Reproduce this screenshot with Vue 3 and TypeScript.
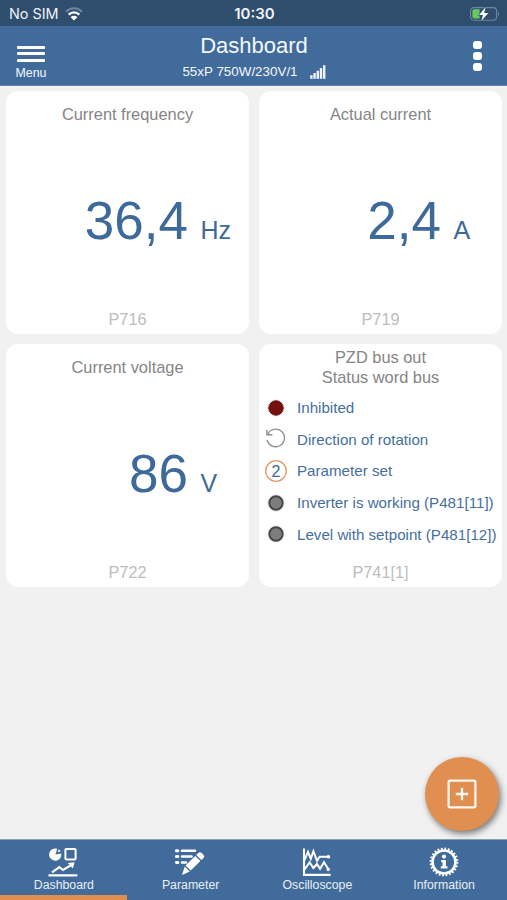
<script setup lang="ts">
interface Metric {
  title: string
  value: string
  unit: string
  code: string
}

type Marker = 'red' | 'rotate' | 'set' | 'grey'

interface StatusRow {
  marker: Marker
  label: string
}

type TabIcon = 'dashboard' | 'parameter' | 'scope' | 'info'

interface Tab {
  icon: TabIcon
  label: string
}

const metrics: Metric[] = [
  { title: 'Current frequency', value: '36,4', unit: 'Hz', code: 'P716' },
  { title: 'Actual current', value: '2,4', unit: 'A', code: 'P719' },
  { title: 'Current voltage', value: '86', unit: 'V', code: 'P722' },
]

const statusRows: StatusRow[] = [
  { marker: 'red', label: 'Inhibited' },
  { marker: 'rotate', label: 'Direction of rotation' },
  { marker: 'set', label: 'Parameter set' },
  { marker: 'grey', label: 'Inverter is working (P481[11])' },
  { marker: 'grey', label: 'Level with setpoint (P481[12])' },
]

const tabs: Tab[] = [
  { icon: 'dashboard', label: 'Dashboard' },
  { icon: 'parameter', label: 'Parameter' },
  { icon: 'scope', label: 'Oscilloscope' },
  { icon: 'info', label: 'Information' },
]
const activeTab = 0
</script>

<template>
  <div class="screen">
    <div class="status-bar">
      <div class="carrier">
        <span>No SIM</span>
        <svg class="wifi" width="18" height="14" viewBox="0 0 18 14" fill="none">
          <path d="M1.1 4.7A11 11 0 0 1 16.9 4.7" stroke="#6d859e" stroke-width="2" />
          <path d="M3.7 7.6A7.4 7.4 0 0 1 14.3 7.6" stroke="#fff" stroke-width="2.3" />
          <path d="M9 13.6L5.6 10.2A4.8 4.8 0 0 1 12.4 10.2Z" fill="#fff" />
        </svg>
      </div>
      <div class="clock">10:30</div>
      <div class="battery">
        <svg width="30" height="16" viewBox="0 0 30 16">
          <rect x="0.6" y="1.6" width="26" height="12.6" rx="3.4" fill="none" stroke="#7288a0" stroke-width="1.1" />
          <path d="M28 5.5q2.1 2.4 0 4.8z" fill="#7288a0" />
          <path d="M4.2 3.2H9.6V12.6H4.2Q2.4 12.6 2.4 10.8V5Q2.4 3.2 4.2 3.2Z" fill="#62cb62" />
          <path d="M15.7 1L9 8.9H13L11.2 15L18.4 6.9H14.2Z" fill="#fff" stroke="#2f4d6d" stroke-width="1.2" paint-order="stroke" />
        </svg>
      </div>
    </div>

    <header class="app-bar">
      <button class="menu">
        <span class="burger"><i></i><i></i><i></i></span>
        <span class="menu-label">Menu</span>
      </button>
      <div class="heading">
        <h1>Dashboard</h1>
        <div class="device">
          <span>55xP 750W/230V/1</span>
          <svg width="16" height="14" viewBox="0 0 16 14" fill="#eef3f8">
            <rect x="0.2" y="10.2" width="2.4" height="3.6" />
            <rect x="3.4" y="8" width="2.4" height="5.8" />
            <rect x="6.6" y="5.8" width="2.4" height="8" />
            <rect x="9.8" y="3" width="2.4" height="10.8" />
            <rect x="13" y="0.2" width="2.4" height="13.6" />
          </svg>
        </div>
      </div>
      <button class="more"><i></i><i></i><i></i></button>
    </header>

    <main class="board">
      <section v-for="m in metrics" :key="m.code" class="card">
        <h2>{{ m.title }}</h2>
        <div class="reading">
          <span class="value">{{ m.value }}</span>
          <span class="unit">{{ m.unit }}</span>
        </div>
        <footer>{{ m.code }}</footer>
      </section>

      <section class="card">
        <h2>PZD bus out<br />Status word bus</h2>
        <ul class="states">
          <li v-for="row in statusRows" :key="row.label">
            <svg class="marker" width="24" height="24" viewBox="0 0 24 24" fill="none">
              <template v-if="row.marker === 'red'">
                <circle cx="12" cy="12" r="9" fill="#f1efef" />
                <circle cx="12" cy="12" r="7.2" fill="#740f0b" stroke="#5b1512" stroke-width="1" />
              </template>
              <template v-else-if="row.marker === 'rotate'">
                <path d="M3.6 7.4A8.8 8.8 0 1 1 3.1 13" stroke="#8f8f8f" stroke-width="1.4" />
                <path d="M2.9 2.9V7.8H8.4" stroke="#8f8f8f" stroke-width="1.4" />
              </template>
              <template v-else-if="row.marker === 'set'">
                <circle cx="12" cy="12" r="10.3" stroke="#e39a63" stroke-width="1.3" />
                <text x="12" y="17.7" text-anchor="middle" class="set-number">2</text>
              </template>
              <template v-else>
                <circle cx="12" cy="12" r="9" fill="#ececec" />
                <circle cx="12" cy="12" r="6.7" fill="#7d7d7d" stroke="#474747" stroke-width="1.9" />
              </template>
            </svg>
            <span>{{ row.label }}</span>
          </li>
        </ul>
        <footer>P741[1]</footer>
      </section>
    </main>

    <button class="fab">
      <svg width="30" height="30" viewBox="0 0 30 30" fill="none" stroke="#fff8ef">
        <rect x="1.6" y="1.6" width="26.8" height="26.8" rx="1.6" stroke-width="2.2" />
        <path d="M15 8.8V21.2M8.8 15H21.2" stroke-width="2.3" />
      </svg>
    </button>

    <nav class="tabs">
      <button v-for="(tab, i) in tabs" :key="tab.label" class="tab" :class="{ active: i === activeTab }">
        <svg width="30" height="30" viewBox="0 0 30 30" fill="none" stroke="#fff">
          <template v-if="tab.icon === 'dashboard'">
            <path d="M7.4 7.6L9.2 1.8A6.1 6.1 0 1 0 13.2 6.4Z" fill="#fff" stroke="none" />
            <path d="M9.6 5.2L10.8 2.2L12.8 4.3Z" fill="#fff" stroke="none" />
            <rect x="17.4" y="2" width="10.2" height="10.4" rx="0.8" stroke-width="2" />
            <path d="M4 25.4L11.4 20.2L15 23L24 17.6" stroke-width="2.2" />
            <path d="M19.8 16L26.6 15.2L24.8 21.6Z" fill="#fff" stroke="none" />
            <path d="M1.3 28.4H28.5" stroke-width="2.1" stroke-linecap="round" />
          </template>
          <template v-else-if="tab.icon === 'parameter'">
            <path d="M1.4 3.8H2.9M1.4 9.6H2.9M1.4 15.4H2.9" stroke-width="3" stroke-linecap="round" />
            <path d="M7 3.8H20M7 9.6H16.6M7 15.4H11" stroke-width="2.5" stroke-linecap="round" />
            <path d="M10.5 18.5L20.2 8.9L25.4 14L15.8 23.6Z" fill="#fff" stroke="none" />
            <path d="M21.2 7.9L23.3 5.9Q25 4.5 26.6 5.9L28.6 7.9Q30 9.4 28.6 11L26.4 13Z" fill="#fff" stroke="none" />
            <path d="M9.7 19.5L14.8 24.4L7 28Z" fill="#fff" stroke="none" />
          </template>
          <template v-else-if="tab.icon === 'scope'">
            <path d="M2 1.5V27.9H28.6" stroke-width="2.1" />
            <path d="M2.5 13.2L6 4.8L8.8 11.8L11.4 4.2L15 13.8L17.6 9.8H26" stroke-width="2" />
            <circle cx="26.4" cy="9.8" r="1.8" fill="#fff" stroke="none" />
            <path d="M2.5 22.6L7.6 15.2L11.4 21L15 17L18 21.8L22 15.2L26.2 22" stroke-width="2" />
            <circle cx="26.3" cy="22.4" r="1.7" fill="#fff" stroke="none" />
          </template>
          <template v-else>
            <circle cx="15" cy="15" r="11.5" stroke-width="2.6" />
            <circle cx="15" cy="15" r="13.4" stroke-width="2" stroke-dasharray="1.8 1.708" />
            <circle cx="15" cy="9.6" r="2.1" fill="#fff" stroke="none" />
            <path d="M12.2 12.9H16.9V19.2H18.5V21.5H11.8V19.2H13.5V15.2H12.2Z" fill="#fff" stroke="none" />
          </template>
        </svg>
        <span>{{ tab.label }}</span>
      </button>
    </nav>
  </div>
</template>

<style>
body {
  margin: 0;
}
</style>

<style scoped>
.screen {
  position: relative;
  display: flex;
  flex-direction: column;
  width: 507px;
  height: 900px;
  overflow: hidden;
  background: #f1f1f1;
  font-family: "Liberation Sans", Arial, sans-serif;
}
button {
  margin: 0;
  padding: 0;
  border: 0;
  background: none;
  color: inherit;
  font: inherit;
}
svg {
  display: block;
  flex: none;
}
.status-bar {
  display: grid;
  grid-template-columns: 1fr auto 1fr;
  align-items: center;
  height: 26px;
  padding: 1px 7px 0 9px;
  box-sizing: border-box;
  background: #2f4d6d;
  color: #eef2f6;
  font-family: Inter, sans-serif;
}
.carrier {
  display: flex;
  align-items: center;
  gap: 6px;
  font-size: 14.4px;
  line-height: 24px;
}
.clock {
  font-size: 15px;
  font-weight: 600;
  line-height: 24px;
}
.battery {
  display: flex;
  justify-content: flex-end;
}
.app-bar {
  display: grid;
  grid-template-columns: 62px 1fr 62px;
  height: 60px;
  background: #416b9b;
  color: #f4f7fa;
  border-bottom: 1px solid #6485aa;
  box-sizing: border-box;
}
.menu {
  display: flex;
  flex-direction: column;
  align-items: center;
  padding-top: 20px;
}
.burger {
  display: flex;
  flex-direction: column;
  gap: 3.4px;
}
.burger i {
  width: 28px;
  height: 3px;
  border-radius: 1px;
  background: #fff;
}
.menu-label {
  margin-top: 3px;
  font-size: 12.4px;
  line-height: 16px;
}
.heading {
  display: flex;
  flex-direction: column;
  align-items: center;
  padding: 7px 0 0 1px;
}
h1 {
  margin: 0;
  font-size: 22px;
  font-weight: 400;
  line-height: 26px;
}
.device {
  display: flex;
  align-items: center;
  gap: 12px;
  padding-top: 5px;
  font-size: 13.4px;
  line-height: 16px;
}
.more {
  display: flex;
  flex-direction: column;
  align-items: center;
  gap: 2.6px;
  padding: 15px 0 0 3px;
}
.more i {
  width: 8.4px;
  height: 8.4px;
  border-radius: 3px;
  background: #fff;
}
.board {
  flex: 1;
  display: grid;
  grid-template-columns: 243px 243px;
  grid-auto-rows: 243px;
  align-content: start;
  gap: 10px;
  padding: 5px 0 0 6px;
}
.card {
  display: flex;
  flex-direction: column;
  border-radius: 12px;
  background: #fff;
}
h2 {
  display: flex;
  align-items: center;
  justify-content: center;
  height: 46px;
  margin: 0;
  color: #858585;
  font-size: 16.4px;
  font-weight: 400;
  line-height: 20px;
  text-align: center;
}
.reading {
  flex: 1;
  display: grid;
  grid-template-columns: 182px 1fr;
  column-gap: 12.5px;
  align-content: center;
  align-items: baseline;
  color: #3e699b;
}
.value {
  font-size: 53px;
  line-height: 60px;
  text-align: right;
}
.unit {
  font-size: 25px;
}
.card footer {
  height: 30px;
  color: #bdbdbd;
  font-size: 16.3px;
  line-height: 30px;
  text-align: center;
}
.states {
  flex: 1;
  margin: 0;
  padding: 2px 0 0 4.5px;
  list-style: none;
  color: #456f9f;
}
.states li {
  display: flex;
  align-items: center;
  gap: 9.5px;
  height: 31.6px;
  font-size: 15.15px;
  white-space: nowrap;
}
.set-number {
  fill: #3e699b;
  font-size: 16px;
}
.fab {
  position: absolute;
  right: 8px;
  bottom: 69.5px;
  display: flex;
  align-items: center;
  justify-content: center;
  width: 74px;
  height: 74px;
  border-radius: 50%;
  background: #e08f51;
  box-shadow: 2px 3px 6px rgba(0, 0, 0, 0.5);
}
.tabs {
  display: grid;
  grid-template-columns: repeat(4, 1fr);
  height: 61px;
  background: #416b9b;
  border-top: 1px solid #8a9db2;
  box-sizing: border-box;
  color: #e9eff5;
}
.tab {
  display: flex;
  flex-direction: column;
  align-items: center;
  padding-top: 7px;
  border-bottom: 5px solid transparent;
  font-size: 12.3px;
  line-height: 16px;
}
.tab span {
  padding-left: 1px;
}
.tab.active {
  border-bottom-color: #e08f51;
}
</style>
